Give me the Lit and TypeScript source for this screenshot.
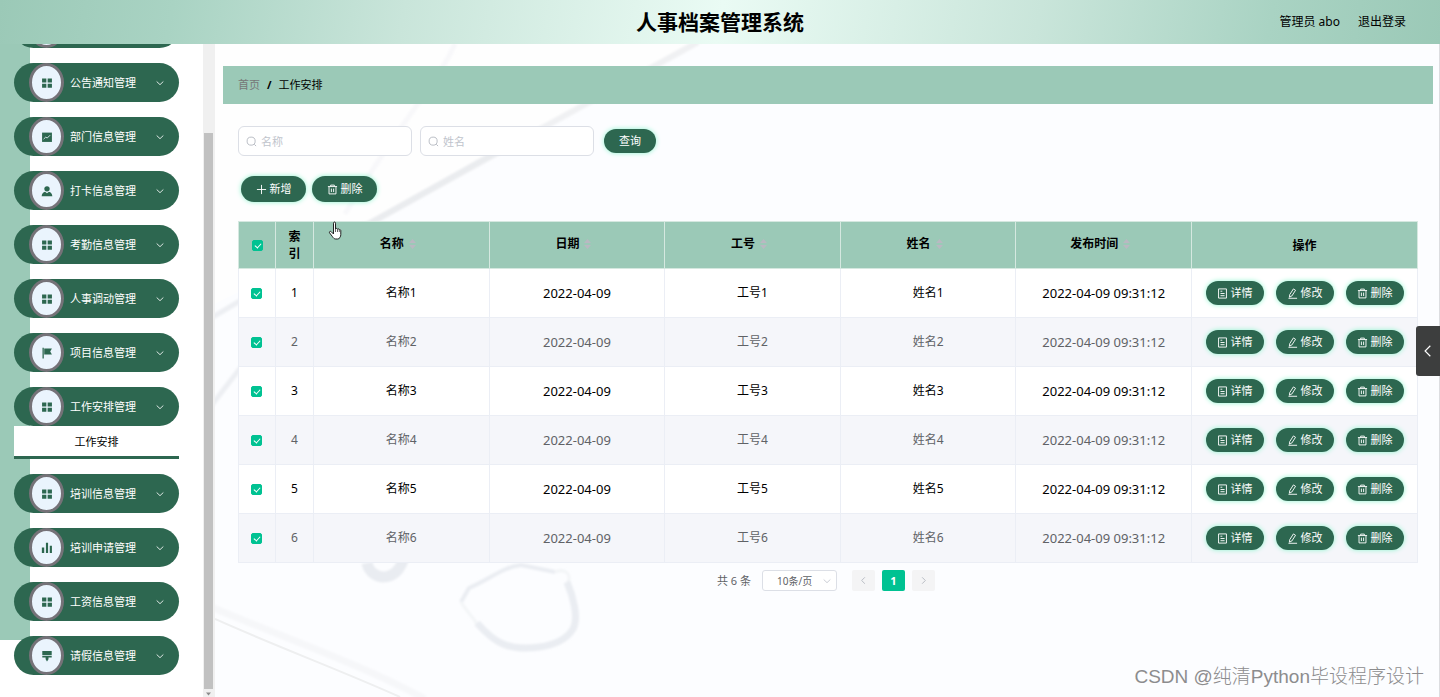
import { LitElement, html, css, svg, TemplateResult } from "lit";
import { customElement, state } from "lit/decorators.js";

const icons: Record<string, TemplateResult> = {
  grid: svg`<path fill="currentColor" d="M1 1.5h4v3.7H1zM6.2 1.5h4v3.7h-4zM1 6.3h4V10H1zM6.2 6.3h4V10h-4z"/>`,
  chart: svg`<path fill="currentColor" d="M1 1.5h9.2v8.7H1z"/><path fill="none" stroke="#eaf4fd" stroke-width=".8" d="M2.4 7.6 4.3 5.8l1.6.7 2.6-2.6"/>`,
  user: svg`<circle cx="5.6" cy="3.6" r="2.5" fill="currentColor"/><path fill="currentColor" d="M.6 10.4c.2-2.3 1.4-3.6 3.2-4.1l1.8 1.5 1.8-1.5c1.800.5 3 1.800 3.200 4.100z"/>`,
  flag: svg`<path fill="currentColor" d="M1.4.8h1.200v10H1.400zM3 1.400h7.200L8.600 4.200l1.600 2.900H3z"/>`,
  bars: svg`<path fill="currentColor" d="M.8 5.200h2.200V10.200H.8zM4.600.800h2v9.400h-2zM8.200 3.600h2v6.600h-2z"/>`,
  brush: svg`<path fill="currentColor" d="M1.200 1h8.800v4H1.200zM1.200 5.500h8.800v1.500H7v1.600L5.600 10.800 4.300 8.600V7H1.200z"/>`,
};

const line = (d: string, cls = "glyph") => html`<svg class=${cls} viewBox="0 0 12 12" aria-hidden="true"><path d=${d} /></svg>`;
const CHEVRON_DOWN = "M2 4.2 6 8l4-3.8";
const TRASH = "M1 2.8h10M4 2.6V1.2h4v1.4M2.2 2.8v8h7.6v-8M4.8 5v3.8M7.2 5v3.8";
const DOC = "M1.7 1h8.6v10H1.7zM3.8 3.5h2M3.8 6h4.5M3.8 8.4h4.5";
const PEN = "M3 7.2 7 1l2.3 1.5-4 6.2L2.6 10zM1.6 11.2h9.4";
const PLUS = "M6 1v10M1 6h10";

const menu = [
  { label: "", icon: "grid" },
  { label: "公告通知管理", icon: "grid" },
  { label: "部门信息管理", icon: "chart" },
  { label: "打卡信息管理", icon: "user" },
  { label: "考勤信息管理", icon: "grid" },
  { label: "人事调动管理", icon: "grid" },
  { label: "项目信息管理", icon: "flag" },
  { label: "工作安排管理", icon: "grid", child: "工作安排" },
  { label: "培训信息管理", icon: "grid" },
  { label: "培训申请管理", icon: "bars" },
  { label: "工资信息管理", icon: "grid" },
  { label: "请假信息管理", icon: "brush" },
];

const columns = ["名称", "日期", "工号", "姓名", "发布时间"];

@customElement("app-root")
export class AppRoot extends LitElement {
  @state() private rows = [1, 2, 3, 4, 5, 6].map((n) => ({ n, on: true }));

  static styles = css`
    :host {
      display: flex;
      flex-direction: column;
      position: relative;
      height: 100vh;
      overflow: hidden;
      box-sizing: border-box;
      background: #fff;
      color: #000;
      font: 11px/16px "Noto Sans", "Noto Sans CJK SC", sans-serif;
    }
    * { box-sizing: border-box; }
    button, input, select { font: inherit; color: inherit; margin: 0; }
    button { border: 0; padding: 0; cursor: pointer; }
    a { color: inherit; text-decoration: none; }
    ul { list-style: none; margin: 0; padding: 0; }

    .top {
      display: grid;
      grid-template-columns: 1fr auto 1fr;
      align-items: center;
      flex: none;
      height: 44px;
      padding: 0 34px;
      background: linear-gradient(100deg, #9bc9b7 0%, #a9d3c3 12%, #c9e5da 28%, #eafbf4 50%, #c9e5da 72%, #a9d3c3 88%, #9bc9b7 100%);
    }
    .title { grid-column: 2; margin: 0; font-size: 21px; line-height: 30px; font-weight: 700; }
    .account { display: flex; justify-content: flex-end; gap: 18px; font-size: 12px; }

    .body { display: flex; flex: 1; min-height: 0; }
    .side {
      flex: none;
      width: 203px;
      padding: 0 24px 0 14px;
      overflow: hidden;
      background: linear-gradient(#9bc9b7, #9bc9b7) 0 0 / 30px 596px no-repeat;
    }
    .menu { display: flex; flex-direction: column; gap: 15px; margin-top: -35px; }
    .entry {
      display: flex;
      align-items: center;
      width: 100%;
      height: 39px;
      padding: 0 14px 0 15px;
      border-radius: 20px;
      background: #2d6750;
      color: #fff;
    }
    .disc {
      display: grid;
      place-items: center;
      width: 35px;
      height: 39px;
      border: 3px solid #757278;
      border-radius: 50%;
      background: #eaf4fd;
      color: #2d6750;
    }
    .disc svg { width: 12px; height: 12px; }
    .name { flex: 1; text-align: left; padding-left: 6px; white-space: nowrap; }
    .glyph, .arrow { width: 11px; height: 11px; fill: none; stroke: currentColor; stroke-width: 1; }
    .arrow { width: 10px; height: 10px; }
    .sub {
      display: block;
      height: 33px;
      line-height: 32px;
      border-bottom: 3px solid #2d6750;
      background: #fff;
      text-align: center;
    }
    .rail { display: flex; flex-direction: column; flex: none; width: 12px; padding: 89px 2px 0 1px; background: #f0f0f0; }
    .thumb { flex: 1; background: #c1c1c1; }
    .rail svg { width: 9px; height: 8px; fill: #8b8b8b; }

    .main {
      position: relative;
      flex: 1;
      min-width: 0;
      padding: 22px 6px 0 8px;
      border-right: 1px solid #dcdde0;
      background: #fcfdff;
    }
    .scene { position: absolute; inset: 0; width: 100%; height: 100%; }
    .content { position: relative; }
    .crumbs {
      display: flex;
      align-items: center;
      gap: 7px;
      height: 38px;
      padding: 0 15px;
      background: #9bc9b7;
    }
    .home { color: #777; }
    .slash { font-weight: 700; }
    .panel { padding: 22px 15px 0; }
    .search { display: flex; align-items: center; gap: 8px; height: 30px; }
    .field { position: relative; width: 174px; height: 30px; }
    .field svg { position: absolute; left: 8px; top: 10px; width: 11px; height: 11px; fill: none; stroke: #b4b8c0; }
    .text {
      width: 100%;
      height: 100%;
      padding: 0 8px 0 22px;
      border: 1px solid #dcdfe6;
      border-radius: 6px;
      background: #fff;
      color: #333;
    }
    .text::placeholder { color: #c0c4cc; opacity: 1; }
    .pill {
      display: inline-flex;
      align-items: center;
      justify-content: center;
      gap: 3px;
      height: 24px;
      border-radius: 13px;
      background: #2d6750;
      color: #fff;
      box-shadow: 0 0 5px #8ff5cf;
      white-space: nowrap;
    }
    .query { width: 52px; margin-left: 2px; }
    .tools { display: flex; gap: 6px; padding: 20px 3px 19px; }
    .tool { width: 65px; height: 26px; }

    table { width: 100%; table-layout: fixed; border-collapse: collapse; text-align: center; font-size: 12px; }
    th, td { border: 1px solid #ebeef5; padding: 0; }
    th { height: 47px; background: #9bc9b7; border-color: #d5e8e0; font-weight: 700; line-height: 17px; }
    td { height: 49px; background: #fff; }
    tr:nth-child(even) td { background: #f5f6fa; color: #606266; }
    .check { width: 37px; }
    .index { width: 38px; padding: 0 12px; }
    .ops { width: 226px; }
    .date { font-size: 13px; }
    .sort { display: inline-flex; align-items: center; gap: 5px; padding: 0 7px 3px 0; background: none; font-weight: 700; }
    .sort svg { width: 7px; height: 10px; fill: #b9b9c2; }
    .actions { display: flex; justify-content: center; gap: 12px; font-size: 11px; }
    .act { width: 58px; }
    .tick {
      display: block;
      position: relative;
      appearance: none;
      width: 11px;
      height: 11px;
      margin: 0 auto 0 12px;
      border: 1px solid #00c292;
      border-radius: 2px;
      background: #fff;
    }
    th .tick { margin-left: 13px; }
    .tick:checked { background: #00c292; }
    .tick:checked::after {
      content: "";
      position: absolute;
      left: 3px;
      top: 1px;
      width: 3px;
      height: 5px;
      border: solid #fff;
      border-width: 0 1px 1px 0;
      transform: rotate(42deg);
    }

    .pager { display: flex; justify-content: center; align-items: center; gap: 7px; padding: 7px 4px 0 0; color: #606266; }
    .size { position: relative; display: flex; margin: 0 8px 0 4px; }
    .size select {
      appearance: none;
      width: 75px;
      height: 21px;
      padding: 0 20px 0 14px;
      border: 1px solid #dcdfe6;
      border-radius: 3px;
      background: #fff;
      font-size: 10px;
    }
    .size svg { position: absolute; right: 5px; top: 6px; color: #c0c4cc; }
    .page { display: grid; place-items: center; width: 23px; height: 21px; border-radius: 2px; background: #f4f4f5; color: #b4b8c0; }
    .page.current { background: #00c292; color: #fff; font-weight: 700; }

    .drawer {
      position: absolute;
      right: 0;
      top: 326px;
      display: grid;
      place-items: center;
      width: 24px;
      height: 50px;
      border-radius: 3px 0 0 3px;
      background: #3d3e3e;
      color: #fff;
    }
    .drawer svg { width: 14px; height: 14px; }
    .mark {
      position: absolute;
      right: 16px;
      bottom: 6px;
      font: 300 19px/28px "Liberation Sans", "Noto Sans CJK SC", sans-serif;
      color: #8c8c8e;
      text-shadow: 0 0 2px #fff;
    }
    .pointer { position: absolute; left: 328px; top: 221px; width: 14px; height: 20px; }
  `;

  private toggleAll(on: boolean) {
    this.rows = this.rows.map((r) => ({ ...r, on }));
  }

  private toggle(n: number) {
    this.rows = this.rows.map((r) => (r.n === n ? { ...r, on: !r.on } : r));
  }

  private searchBox(id: string, label: string) {
    return html`<label class="field" for=${id}>
      <input class="text" id=${id} placeholder=${label} aria-label=${label} />
      <svg viewBox="0 0 12 12" aria-hidden="true"><circle cx="5.6" cy="5.6" r="4.4" /><path d="m9 9 2 2" /></svg>
    </label>`;
  }

  private scene() {
    return html`<svg class="scene" viewBox="0 0 1225 653" preserveAspectRatio="xMinYMin slice" fill="none" aria-hidden="true">
      <defs><filter id="soft"><feGaussianBlur stdDeviation="1" /></filter></defs>
      <path fill="#fefefe" d="M0 0H480L150 182 0 260z" />
      <g filter="url(#soft)">
        <path stroke="#f0f1f3" stroke-width="6" d="M483 -2 150 182" />
        <path stroke="#eaecef" stroke-width="6" d="M300 98 150 182" />
        <path stroke="#f8f8fa" stroke-width="5" d="M240 0C222 40 180 85 130 170" />
        <path stroke="#edeff3" stroke-width="5" d="M-4 274 30 254M-4 362 30 318" />
        <path stroke="#e9ecf1" stroke-width="11" d="M152 519C156 539 188 540 190 505" />
        <path stroke="#eaedf2" stroke-width="4" d="M246 558 254 544C275 535 288 523 306 521L340 528" />
        <path stroke="#f3f5f7" stroke-width="3" d="M340 528C350 524 358 530 352 540M246 558C252 568 258 573 262 580" />
        <path stroke="#eaedf2" stroke-width="7" d="M352 538C358 552 364 574 358 585C345 606 305 607 288 600C278 596 270 588 262 579" />
        <path stroke="#f6f7f9" stroke-width="7" d="M-4 563C70 594 150 622 210 655" />
      </g>
      <path stroke="#eeeff0" stroke-width="2" d="M0 575C60 602 130 628 185 653" />
    </svg>`;
  }

  render() {
    const all = this.rows.every((r) => r.on);
    return html`
      <header class="top">
        <h1 class="title">人事档案管理系统</h1>
        <div class="account"><span>管理员 abo</span><a href="#logout">退出登录</a></div>
      </header>
      <div class="body">
        <nav class="side">
          <ul class="menu">
            ${menu.map(
              (m) => html`<li>
                <button class="entry">
                  <span class="disc"><svg viewBox="0 0 11.2 11.2" aria-hidden="true">${icons[m.icon]}</svg></span>
                  <span class="name">${m.label}</span>
                  ${line(CHEVRON_DOWN, "arrow")}
                </button>
                ${m.child ? html`<a class="sub" href="#plan">${m.child}</a>` : ""}
              </li>`
            )}
          </ul>
        </nav>
        <div class="rail" aria-hidden="true">
          <div class="thumb"></div>
          <svg viewBox="0 0 9 8"><path d="M2 3.5h5L4.5 6.5z" /></svg>
        </div>
        <main class="main">
          ${this.scene()}
          <div class="content">
            <div class="crumbs">
              <a class="home" href="#home">首页</a><span class="slash">/</span><span>工作安排</span>
            </div>
            <div class="panel">
              <form class="search" @submit=${(e: Event) => e.preventDefault()}>
                ${this.searchBox("name", "名称")} ${this.searchBox("person", "姓名")}
                <button class="pill query">查询</button>
              </form>
              <div class="tools">
                <button class="pill tool">${line(PLUS)}新增</button>
                <button class="pill tool">${line(TRASH)}删除</button>
              </div>
              <table>
                <thead>
                  <tr>
                    <th class="check">
                      <input class="tick" type="checkbox" aria-label="全选" .checked=${all}
                        @change=${(e: Event) => this.toggleAll((e.target as HTMLInputElement).checked)} />
                    </th>
                    <th class="index">索引</th>
                    ${columns.map(
                      (c) => html`<th>
                        <button class="sort">${c}<svg viewBox="0 0 7 10" aria-hidden="true"><path d="M0 4 3.5 0 7 4zM0 6H7L3.5 10z" /></svg></button>
                      </th>`
                    )}
                    <th class="ops">操作</th>
                  </tr>
                </thead>
                <tbody>
                  ${this.rows.map(
                    ({ n, on }) => html`<tr>
                      <td>
                        <input class="tick" type="checkbox" aria-label="选择 ${n}" .checked=${on} @change=${() => this.toggle(n)} />
                      </td>
                      <td>${n}</td>
                      <td>名称${n}</td>
                      <td class="date">2022-04-09</td>
                      <td>工号${n}</td>
                      <td>姓名${n}</td>
                      <td class="date">2022-04-09 09:31:12</td>
                      <td>
                        <div class="actions">
                          <button class="pill act">${line(DOC)}详情</button>
                          <button class="pill act">${line(PEN)}修改</button>
                          <button class="pill act">${line(TRASH)}删除</button>
                        </div>
                      </td>
                    </tr>`
                  )}
                </tbody>
              </table>
              <div class="pager">
                <span>共 6 条</span>
                <label class="size">
                  <select aria-label="每页条数"><option>10条/页</option></select>
                  ${line(CHEVRON_DOWN, "arrow")}
                </label>
                <button class="page" aria-label="上一页">${line("M7.5 2.5 4 6l3.5 3.5")}</button>
                <button class="page current">1</button>
                <button class="page" aria-label="下一页">${line("M4.5 2.5 8 6 4.5 9.5")}</button>
              </div>
            </div>
          </div>
        </main>
      </div>
      <button class="drawer" aria-label="展开">${line("M8 1.5 3.5 6 8 10.5")}</button>
      <div class="mark">CSDN @纯清Python毕设程序设计</div>
      <svg class="pointer" viewBox="0 0 14 20" aria-hidden="true">
        <path fill="#fff" stroke="#222" d="M5.5 13V2.2c0-1.6 2-1.6 2 0V8c.3-1 1.9-.8 2 .3.5-.7 1.7-.5 1.8.5.6-.5 1.5-.1 1.5.8v3.9c0 2.3-1.3 4.5-3.3 4.500H7.700c-1.500 0-2.400-1-3.200-2.300L1.500 11.800c-.6-1.200.8-2 1.800-1z" />
        <path stroke="#222" stroke-width=".7" d="M7.5 8v3M9.5 8.5V11M11.3 9v2" />
      </svg>
    `;
  }
}
